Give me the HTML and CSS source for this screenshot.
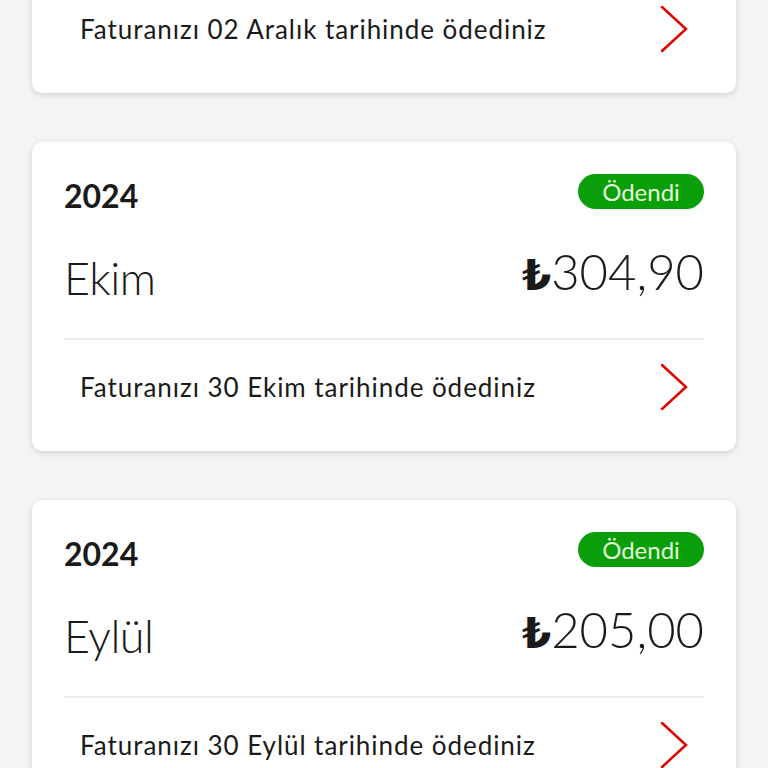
FILE: index.html
```html
<!DOCTYPE html>
<html lang="tr">
<head>
<meta charset="utf-8">
<link rel="stylesheet" href="styles.css">
</head>
<body>
<div class="list">
  <div class="card">
    <div class="head"><span class="year">2024</span><span class="badge">Ödendi</span></div>
    <div class="main"><span class="month">Kasım</span><span class="amount"><span class="tl">₺</span>250,00</span></div>
    <div class="foot"><span class="note">Faturanızı 02 Aralık tarihinde ödediniz</span>
      <svg class="chev" viewBox="0 0 28 48" width="28" height="48"><polyline points="2,2 26,24 2,46" /></svg></div>
  </div>
  <div class="card">
    <div class="head"><span class="year">2024</span><span class="badge">Ödendi</span></div>
    <div class="main"><span class="month">Ekim</span><span class="amount"><span class="tl">₺</span>304,90</span></div>
    <div class="foot"><span class="note">Faturanızı 30 Ekim tarihinde ödediniz</span>
      <svg class="chev" viewBox="0 0 28 48" width="28" height="48"><polyline points="2,2 26,24 2,46" /></svg></div>
  </div>
  <div class="card">
    <div class="head"><span class="year">2024</span><span class="badge">Ödendi</span></div>
    <div class="main"><span class="month">Eylül</span><span class="amount"><span class="tl">₺</span>205,00</span></div>
    <div class="foot"><span class="note">Faturanızı 30 Eylül tarihinde ödediniz</span>
      <svg class="chev" viewBox="0 0 28 48" width="28" height="48"><polyline points="2,2 26,24 2,46" /></svg></div>
  </div>
</div>
</body>
</html>
```
FILE: styles.css
```css
html, body {
  margin: 0;
  padding: 0;
  background: #f4f4f4;
  font-family: Lato, "Noto Sans", sans-serif;
  color: #1a1a1a;
  overflow: hidden;
}
.list {
  display: flex;
  flex-direction: column;
  gap: 49px;
  padding: 0 32px;
  margin-top: -216px;
}
.card {
  background: #fff;
  border-radius: 10px;
  box-shadow: 0 2px 6px rgba(0,0,0,0.14);
  padding: 32px 32px 0;
  height: 309px;
  box-sizing: border-box;
  display: flex;
  flex-direction: column;
}
.head {
  display: flex;
  justify-content: space-between;
  align-items: center;
  height: 35px;
}
.year {
  font-weight: 700;
  font-size: 32px;
  line-height: 35px;
  padding-top: 8px;
}
.badge {
  background: #0a9e0a;
  color: #e4fbd8;
  font-size: 24px;
  line-height: 35px;
  height: 35px;
  width: 126px;
  text-align: center;
  border-radius: 18px;
  font-weight: 400;
}
.main {
  display: flex;
  justify-content: space-between;
  align-items: flex-end;
  height: 131px;
  border-bottom: 2px solid #ececec;
  box-sizing: border-box;
  padding-bottom: 37px;
}
.month {
  font-size: 45px;
  font-weight: 300;
  line-height: 45px;
  letter-spacing: -0.5px;
}
.amount {
  font-size: 49px;
  font-weight: 300;
  line-height: 49px;
  margin-bottom: 1px;
}
.tl {
  font-family: "DejaVu Sans", sans-serif;
  font-weight: 700;
  font-size: 42px;
}
.foot {
  display: flex;
  align-items: center;
  justify-content: space-between;
  padding: 23px 16px 0;
  height: 48px;
}
.note {
  font-size: 26px;
  letter-spacing: 0.95px;
}
.chev {
  display: block;
}
.chev polyline {
  fill: none;
  stroke: #e00000;
  stroke-width: 2.5;
  stroke-linecap: round;
  stroke-linejoin: miter;
}
```
